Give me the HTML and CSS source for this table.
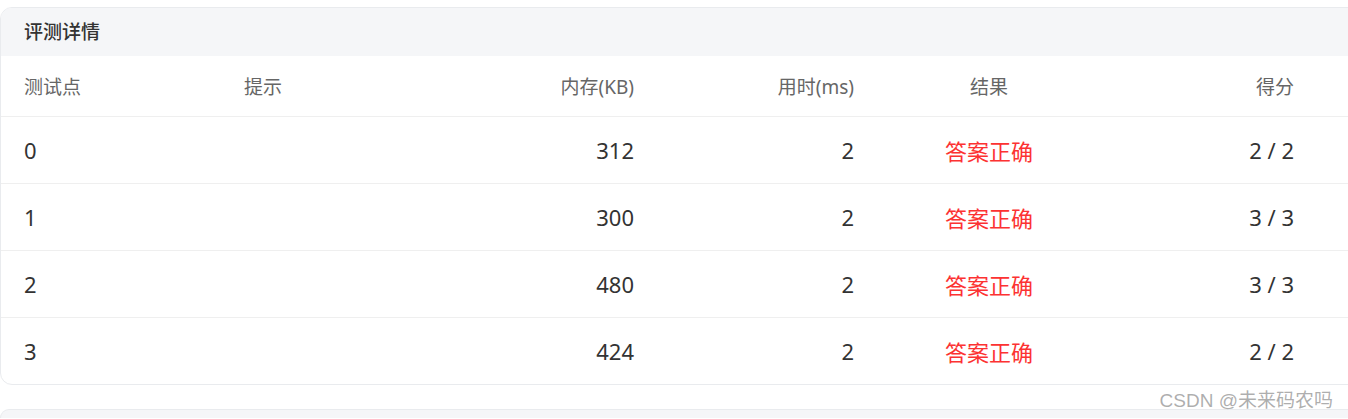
FILE: index.html
```html
<!DOCTYPE html>
<html lang="zh">
<head>
<meta charset="utf-8">
<link rel="stylesheet" href="styles.css">
</head>
<body>
<div class="page">
  <section class="card">
    <div class="card-title">评测详情</div>
    <div class="table">
      <div class="row head">
        <div class="c c1">测试点</div>
        <div class="c c2">提示</div>
        <div class="c c3">内存(KB)</div>
        <div class="c c4">用时(ms)</div>
        <div class="c c5">结果</div>
        <div class="c c6">得分</div>
      </div>
      <div class="row">
        <div class="c c1">0</div><div class="c c2"></div><div class="c c3">312</div><div class="c c4">2</div><div class="c c5 ok">答案正确</div><div class="c c6">2 / 2</div>
      </div>
      <div class="row">
        <div class="c c1">1</div><div class="c c2"></div><div class="c c3">300</div><div class="c c4">2</div><div class="c c5 ok">答案正确</div><div class="c c6">3 / 3</div>
      </div>
      <div class="row">
        <div class="c c1">2</div><div class="c c2"></div><div class="c c3">480</div><div class="c c4">2</div><div class="c c5 ok">答案正确</div><div class="c c6">3 / 3</div>
      </div>
      <div class="row last">
        <div class="c c1">3</div><div class="c c2"></div><div class="c c3">424</div><div class="c c4">2</div><div class="c c5 ok">答案正确</div><div class="c c6">2 / 2</div>
      </div>
    </div>
  </section>
  <section class="card next"></section>
</div>
<div class="watermark">CSDN @未来码农吗</div>
</body>
</html>
```
FILE: styles.css
```css
html, body {
  margin: 0;
  padding: 0;
  background: #ffffff;
  overflow: hidden;
}
body {
  font-family: "Noto Sans", "Noto Sans CJK SC", sans-serif;
  color: #333333;
  width: 1348px;
  height: 419px;
  position: relative;
}
.page {
  padding-top: 7px;
  display: flex;
  flex-direction: column;
  gap: 24px;
  width: 1370px;
}
.card {
  border: 1px solid #e9ebee;
  border-radius: 12px;
  background: #ffffff;
  overflow: hidden;
}
.card.next {
  background: #f5f6f8;
  height: 8px;
  border-bottom: none;
  border-radius: 12px 12px 0 0;
}
.card-title {
  height: 48px;
  line-height: 48px;
  background: #f5f6f8;
  padding-left: 23px;
  font-size: 19px;
  font-weight: 500;
  color: #333333;
}
.row {
  display: grid;
  grid-template-columns: 219px 220px 220px 220px 220px 220px 1fr;
  height: 66px;
  align-items: center;
  border-bottom: 1px solid #efefef;
  font-size: 22px;
  color: #333333;
}
.row.head {
  height: 60px;
  font-size: 19px;
  color: #666666;
}
.row.last {
  border-bottom: none;
}
.c {
  padding: 0 26px 0 24px;
  white-space: nowrap;
}
.c1 { padding-left: 23px; }
.c3, .c4, .c6 { text-align: right; }
.c5 { text-align: center; }
.ok { color: #fc3232; }
.watermark {
  position: absolute;
  right: 15px;
  bottom: 7px;
  font-size: 19px;
  color: rgba(120, 120, 120, 0.6);
  font-family: "Liberation Sans", "Noto Sans CJK SC", sans-serif;
}
```
